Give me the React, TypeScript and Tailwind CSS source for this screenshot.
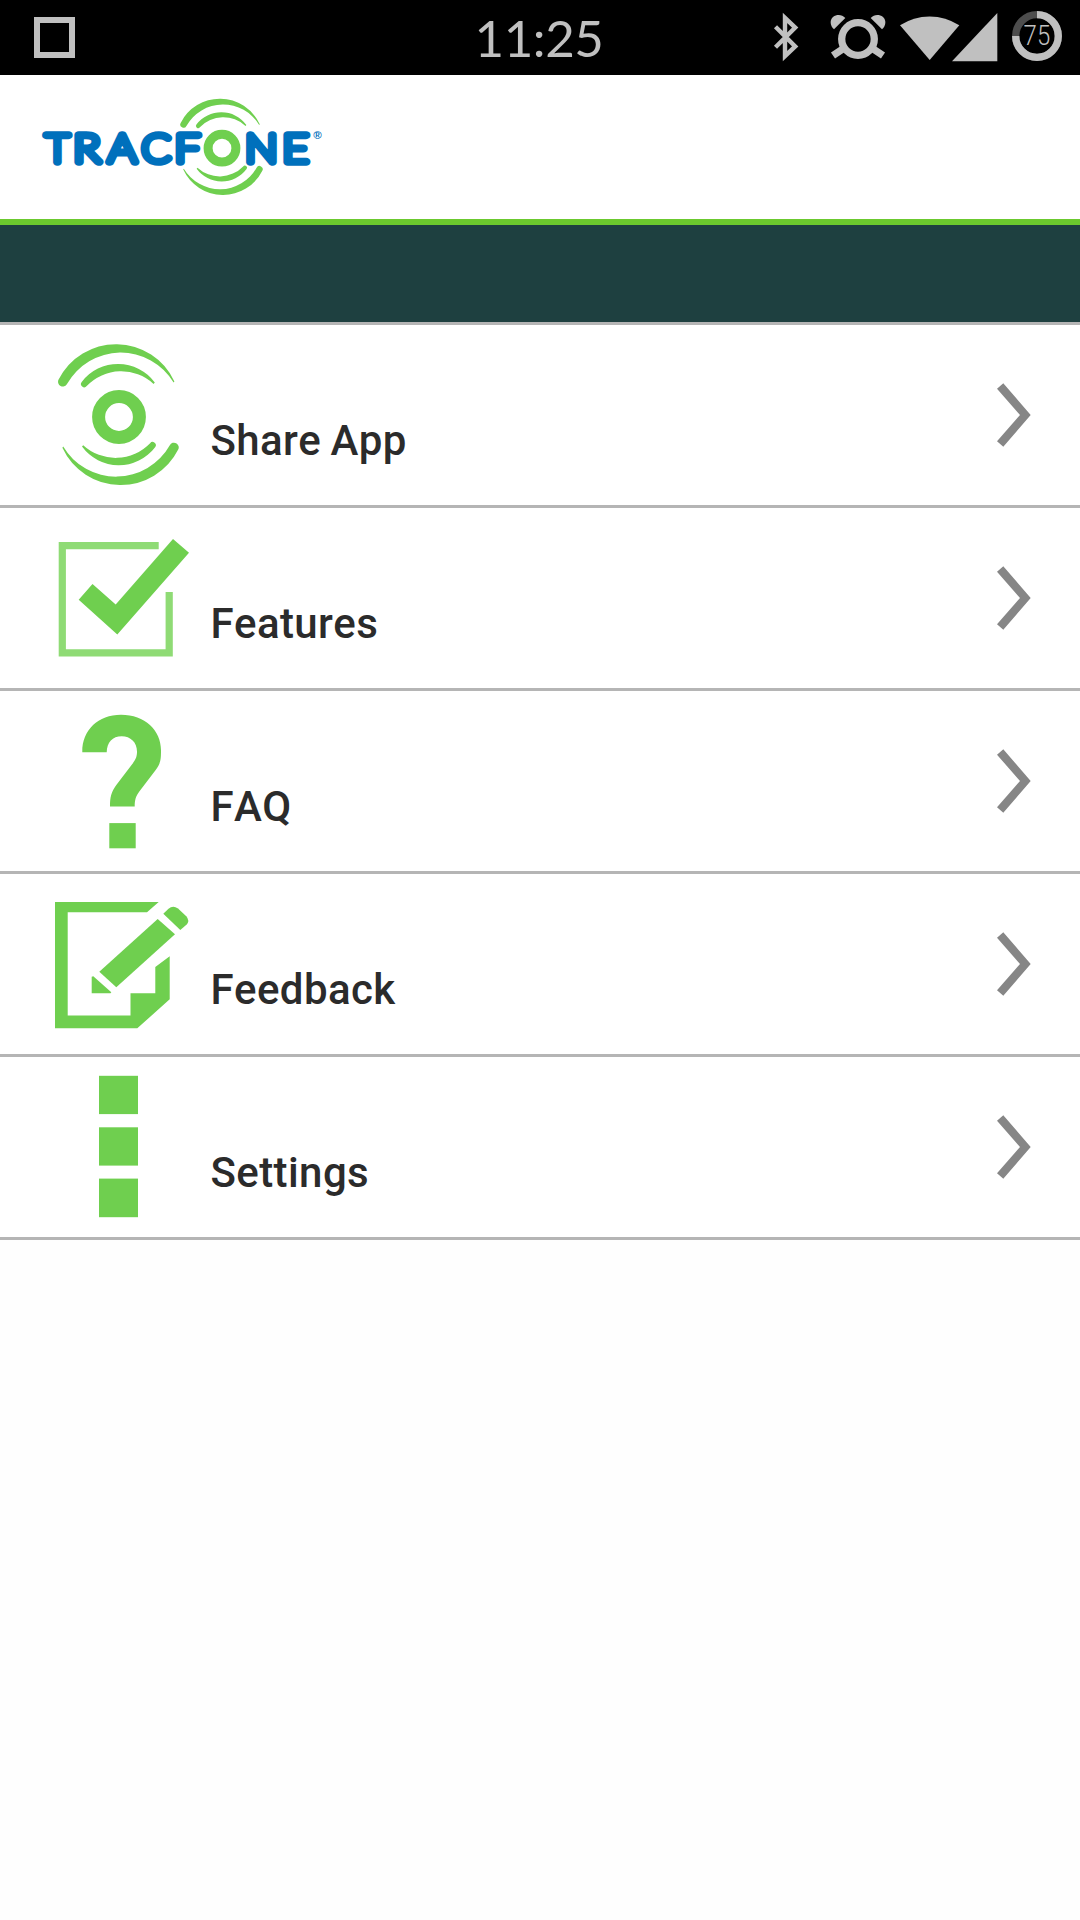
import type { ReactNode } from "react";

type MenuItem = {
  label: string;
  icon: ReactNode;
};

// Two tapered arcs above, and the same pair turned upside down below.
function Waves() {
  const arcs = (
    <>
      <path d="M58.6 54.6 A64.3 64.3 0 0 1 174.4 56.4 L173.6 57.6 A61.6 61.6 0 0 0 67 59 A4.7 4.7 0 0 1 58.6 54.6 Z" />
      <path d="M81.7 57 A45.5 45.5 0 0 1 154.8 57.6 L153.6 59 A47.8 47.8 0 0 0 86.7 61 A3.1 3.1 0 0 1 81.7 57 Z" />
    </>
  );
  return (
    <g>
      {arcs}
      <g transform="rotate(180 118.4 89.6)">{arcs}</g>
    </g>
  );
}

const logoLetters = [
  { char: "T", x: 45.4, width: 23.6 },
  { char: "R", x: 73.6, width: 26.6 },
  { char: "A", x: 108.2, width: 27.8 },
  { char: "C", x: 141.8, width: 28.6 },
  { char: "F", x: 174.8, width: 25 },
  { char: "N", x: 245.3, width: 32.2 },
  { char: "E", x: 282.5, width: 26 },
];

function Logo() {
  return (
    <svg width="340" height="144" viewBox="0 0 340 144" role="img" aria-label="TracFone">
      <g fill="#6fcf4f" transform="translate(221.5 71.85) scale(0.683) translate(-118.4 -89.6)">
        <Waves />
      </g>
      <g
        className="font-['Lato',sans-serif] font-thin"
        fontSize="38.5"
        fill="#0070bc"
        stroke="#0070bc"
        strokeWidth="7.6"
        strokeLinejoin="round"
        strokeLinecap="round"
      >
        {logoLetters.map((l) => (
          <text key={l.char} x={l.x} y="87" textLength={l.width} lengthAdjust="spacingAndGlyphs">
            {l.char}
          </text>
        ))}
      </g>
      <circle cx="222" cy="73.2" r="13.9" fill="none" stroke="#6fcf4f" strokeWidth="9" />
      <text x="313.2" y="64.2" fontSize="11.5" fill="#0070bc" className="font-['Liberation_Sans',sans-serif] font-bold">
        ®
      </text>
    </svg>
  );
}

function StatusIcons() {
  return (
    <svg width="330" height="75" viewBox="0 0 330 75" fill="#c0c0c0">
      <path
        d="M25.5 26.8 L45.2 46.4 L35 56.2 V17.8 L45.2 27.6 L25.5 47.2"
        fill="none"
        stroke="#c0c0c0"
        strokeWidth="4.4"
      />
      <g>
        <circle cx="108" cy="39" r="16.3" fill="none" stroke="#c0c0c0" strokeWidth="7.3" />
        <path d="M95 47.5 L83 55.5 M121 47.5 L133 55.5" stroke="#c0c0c0" strokeWidth="7.3" />
        <path d="M84 29.3 C80 26 79.5 20 83 17 C87 14 92 14.5 95.3 18 Z" />
        <path d="M132 29.3 C136 26 136.5 20 133 17 C129 14 124 14.5 120.7 18 Z" />
      </g>
      <path d="M150 25.3 A54 54 0 0 1 209.3 25.3 L179.7 60 Z" />
      <path d="M202 61.3 L247.3 13 V61.3 Z" />
      <circle cx="287" cy="36" r="21.3" fill="none" stroke="#4d4d4d" strokeWidth="7.3" />
      <path d="M287 14.7 A21.3 21.3 0 1 1 265.7 36" fill="none" stroke="#c0c0c0" strokeWidth="7.3" />
      <text
        x="273.6"
        y="45"
        fontSize="27"
        textLength="26.6"
        lengthAdjust="spacingAndGlyphs"
        className="font-['Roboto',sans-serif] font-light"
      >
        75
      </text>
    </svg>
  );
}

function StatusBar() {
  return (
    <div className="grid h-[75px] grid-cols-[414px_250px_1fr] items-center bg-black">
      <div className="ml-[34px] size-[41px] border-[6.5px] border-[#c0c0c0]" />
      <div className="text-center font-['Lato',sans-serif] text-[51px] leading-[75px] tracking-[-0.4px] text-[#c0c0c0]">
        11:25
      </div>
      <div className="pl-[86px]">
        <StatusIcons />
      </div>
    </div>
  );
}

const items: MenuItem[] = [
  {
    label: "Share App",
    icon: (
      <>
        <Waves />
        <circle cx="119" cy="92" r="20.4" fill="none" stroke="#6fcf4f" strokeWidth="13" />
      </>
    ),
  },
  {
    label: "Features",
    icon: (
      <>
        <path d="M158.7 37.6 H62.3 V144.8 H169.2 V84" fill="none" stroke="#8fdb75" strokeWidth="7.2" />
        <path d="M92.5 76 L115.7 96.4 L173 31 L189 44.7 L117.3 126.4 L78.7 91.7 Z" />
      </>
    ),
  },
  {
    label: "FAQ",
    icon: (
      <>
        <path d="M82.3 61.3 C82 39.3 98 23.8 121 23.8 C145 23.8 161 39.3 161 59.3 C161 69.3 160.5 72.3 155.5 79.3 L139.5 100.3 C135.5 105.8 134.7 109.3 134.7 115.6 H110 C110 106.3 111 101.3 116.5 93.8 L132.5 72.8 C136 68.3 137 65.3 137 60.6 C137 51.3 130.5 45.3 121.7 45.3 C112.5 45.3 107 51.3 106.7 61.3 Z" />
        <rect x="109.3" y="132.1" width="26.4" height="25.2" />
      </>
    ),
  },
  {
    label: "Feedback",
    icon: (
      <>
        <path d="M55 28 H158.7 L147 38.3 H67.7 V141.6 H130.5 V119.3 H155.3 V93 L169.7 82.3 V125.3 L137.3 154.3 H55 Z" />
        <path d="M157.7 45 L175 60.3 L116.3 113.3 L99.3 97.8 Z" />
        <path d="M91.7 102.8 L93.3 102.3 L111.3 118.3 L110.5 119.3 H91.7 Z" />
        <path d="M163.3 39.8 L168.5 34.8 Q173 30.8 178 34.6 L186.3 42.3 Q190 46.8 186.7 50.5 L180.3 56 Z" />
      </>
    ),
  },
  {
    label: "Settings",
    icon: (
      <>
        <rect x="99" y="18.8" width="39" height="38.3" />
        <rect x="99" y="70.3" width="39" height="38.3" />
        <rect x="99" y="121.6" width="39" height="38.6" />
      </>
    ),
  },
];

function MenuRow({ label, icon }: MenuItem) {
  return (
    <li className="flex h-[183px] border-b-[3px] border-[#b5b5b5] bg-white">
      <svg width="210" height="180" viewBox="0 0 210 180" fill="#6fcf4f" className="shrink-0">
        {icon}
      </svg>
      <span className="grow pt-[91px] pl-[0.5px] font-['Roboto',sans-serif] text-[42px] leading-[50px] font-medium tracking-[0.4px] text-[#2b2b2b] [font-kerning:none] [word-spacing:-1.5px]">
        {label}
      </span>
      <svg width="90" height="180" viewBox="990 0 90 180" fill="#868686" className="shrink-0">
        <path d="M1003.3 58.3 L1030.7 90 L1003.3 121.7 L997 116.3 L1020 90 L997 63.7 Z" />
      </svg>
    </li>
  );
}

export default function App() {
  return (
    <div className="min-h-[1920px] w-[1080px] bg-[#fefefe]">
      <StatusBar />
      <header className="h-[150px] border-b-[6px] border-[#6bc92e] bg-white">
        <Logo />
      </header>
      <div className="h-[100px] border-b-[3px] border-[#b5b5b5] bg-[#1e4040]" />
      <ul>
        {items.map((item) => (
          <MenuRow key={item.label} label={item.label} icon={item.icon} />
        ))}
      </ul>
    </div>
  );
}
